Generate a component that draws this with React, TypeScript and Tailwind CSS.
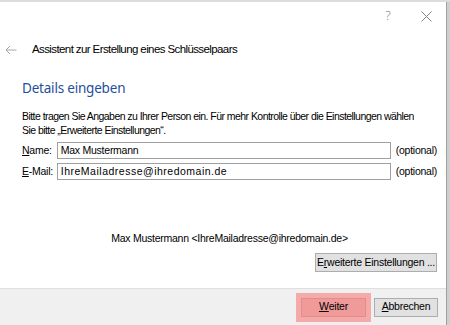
import React from "react";

const ui = { fontFamily: '"Liberation Sans", Arial, sans-serif' };

export default function App() {
  return (
    <div className="w-[450px] h-[325px] bg-[#d4d4d4] overflow-hidden flex flex-col text-[10.5px] tracking-[-0.25px] text-black" style={ui}>
      <div className="h-[2px] bg-[#dcdcdc]" />
      <div className="flex flex-1">
        <div className="w-[447px] bg-white flex flex-col border-r border-[#a0a0a0]">
          {/* caption bar */}
          <div className="h-[28px] flex justify-end text-[#8a8a8a] tracking-normal">
            <div className="w-[40px] flex items-center justify-center text-[13px] font-light pl-[4px]" style={{ fontFamily: '"Noto Sans", sans-serif' }}>?</div>
            <div className="w-[40px] flex items-center justify-center">
              <svg width="11" height="11" viewBox="0 0 11 11" stroke="#808080" strokeWidth="1" fill="none">
                <path d="M0.5 0.5 L10.5 10.5 M10.5 0.5 L0.5 10.5" />
              </svg>
            </div>
          </div>
          {/* header */}
          <div className="h-[40px] flex items-center">
            <div className="w-[32px] pl-[5px] flex items-center">
              <svg width="12" height="10" viewBox="0 0 12 10" stroke="#a8a8a8" strokeWidth="1" fill="none">
                <path d="M11.5 5 H1 M5 1 L1 5 L5 9" />
              </svg>
            </div>
            <div className="text-[11.5px] tracking-[-0.6px] text-black whitespace-nowrap">Assistent zur Erstellung eines Schlüsselpaars</div>
          </div>
          {/* body */}
          <div className="pl-[22px] pr-[9px]">
            <div className="text-[13.5px] leading-[20px] tracking-[-0.2px] text-[#1f4ea0] mt-[8px]" style={{ fontFamily: '"Noto Sans", sans-serif' }}>Details eingeben</div>
            <div className="leading-[14px] mt-[11px] tracking-[-0.55px] whitespace-nowrap">
              Bitte tragen Sie Angaben zu Ihrer Person ein. Für mehr Kontrolle über die Einstellungen wählen
              <br />
              Sie bitte „Erweiterte Einstellungen“.
            </div>
            <div className="flex items-center mt-[5px] h-[17px]">
              <div className="w-[35px] whitespace-nowrap"><span className="underline">N</span>ame:</div>
              <div className="w-[336px] h-[17px] border border-[#a0a0a0] flex items-center px-[3px] whitespace-nowrap">Max Mustermann</div>
              <div className="ml-[5px] whitespace-nowrap">(optional)</div>
            </div>
            <div className="flex items-center mt-[4px] h-[17px]">
              <div className="w-[35px] whitespace-nowrap"><span className="underline">E</span>-Mail:</div>
              <div className="w-[336px] h-[17px] border border-[#a0a0a0] flex items-center px-[3px] whitespace-nowrap tracking-[0.5px]">IhreMailadresse@ihredomain.de</div>
              <div className="ml-[5px] whitespace-nowrap">(optional)</div>
            </div>
            <div className="mt-[51px] h-[14px] flex justify-center">
              <span className="whitespace-nowrap">Max Mustermann &lt;IhreMailadresse@ihredomain.de&gt;</span>
            </div>
            <div className="flex justify-end mt-[8px]">
              <div className="w-[122px] h-[19px] border border-[#adadad] bg-[#e1e1e1] flex items-center justify-center whitespace-nowrap">
                E<span className="underline">r</span>weiterte Einstellungen ...
              </div>
            </div>
          </div>
          <div className="flex-1" />
          {/* footer */}
          <div className="h-[37px] bg-[#f0f0f0] border-t border-[#dfdfdf] flex items-center justify-end pr-[8px]">
            <div className="w-[75px] h-[29px] bg-[#f5aaaa] flex items-center justify-center">
              <div className="w-[65px] h-[19px] border border-[#e38c8c] bg-[#f09a9a] flex items-center justify-center">
                <span className="underline">W</span>eiter
              </div>
            </div>
            <div className="w-[64px] h-[19px] ml-[3px] border border-[#adadad] bg-[#e1e1e1] flex items-center justify-center">
              <span className="underline">A</span>bbrechen
            </div>
          </div>
        </div>
        <div className="flex-1 bg-[#cfcfcf]" />
      </div>
    </div>
  );
}
